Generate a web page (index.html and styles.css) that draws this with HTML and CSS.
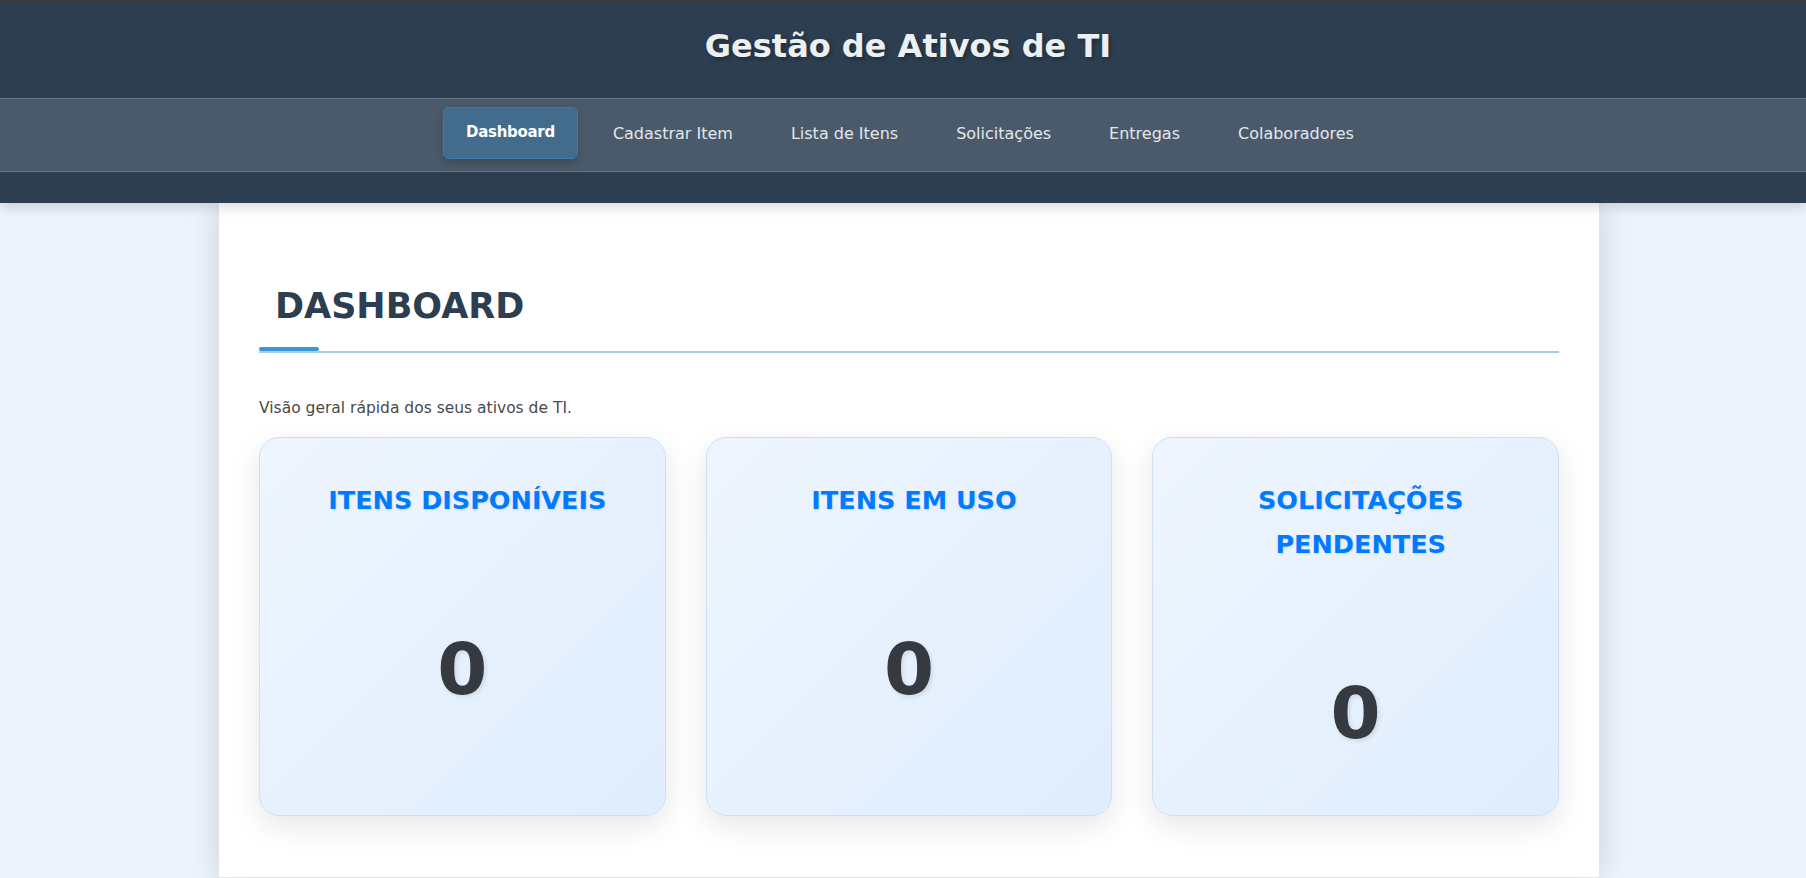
FILE: index.html
```html
<!DOCTYPE html>
<html lang="pt-BR">
<head>
<meta charset="utf-8">
<title>Gestão de Ativos de TI</title>
<link rel="stylesheet" href="styles.css">
</head>
<body>
<header class="site-header">
  <h1 class="site-title">Gestão de Ativos de TI</h1>
  <nav class="main-nav">
    <a class="nav-link active" href="#">Dashboard</a>
    <a class="nav-link" href="#">Cadastrar Item</a>
    <a class="nav-link" href="#">Lista de Itens</a>
    <a class="nav-link" href="#">Solicitações</a>
    <a class="nav-link" href="#">Entregas</a>
    <a class="nav-link" href="#">Colaboradores</a>
  </nav>
</header>
<div class="page">
  <main class="container">
    <h2 class="section-title">DASHBOARD</h2>
    <p class="intro">Visão geral rápida dos seus ativos de TI.</p>
    <div class="cards">
      <div class="card">
        <h3 class="card-title">ITENS DISPONÍVEIS</h3>
        <div class="card-value">0</div>
      </div>
      <div class="card">
        <h3 class="card-title">ITENS EM USO</h3>
        <div class="card-value">0</div>
      </div>
      <div class="card">
        <h3 class="card-title">SOLICITAÇÕES<br>PENDENTES</h3>
        <div class="card-value">0</div>
      </div>
    </div>
  </main>
</div>
</body>
</html>
```

FILE: styles.css
```css
* { box-sizing: border-box; }

html, body {
  margin: 0;
  padding: 0;
}

body {
  background: #edf3fb;
  font-family: "DejaVu Sans", "Liberation Sans", sans-serif;
  color: #333;
  min-height: 878px;
}

.site-header {
  position: relative;
  z-index: 2;
  background: #2c3e50;
  border-top: 2px solid #3a3a3a;
  padding: 25px 0 31px;
  box-shadow: 0 4px 12px rgba(0, 0, 0, 0.15);
}

.site-title {
  margin: 0 0 33px;
  padding-left: 10px;
  text-align: center;
  color: #ecf0f1;
  font-size: 32px;
  line-height: 38px;
  font-weight: bold;
  text-shadow: 2px 2px 4px rgba(0, 0, 0, 0.3);
}

.main-nav {
  display: flex;
  justify-content: center;
  gap: 12px;
  padding: 10px 0 10px 14px;
  background: rgba(255, 255, 255, 0.15);
  border-top: 1px solid #66758a;
  border-bottom: 1px solid #66758a;
}

.nav-link {
  display: block;
  padding: 14px 22px 16px;
  border: 1px solid transparent;
  border-radius: 6px;
  color: #e2e8ec;
  text-decoration: none;
  font-size: 16px;
  line-height: 20px;
}

.nav-link.active {
  background: #436b8c;
  border-color: #3c7ab0;
  color: #ffffff;
  font-weight: bold;
  font-size: 15px;
  letter-spacing: -0.3px;
  transform: translateY(-2px);
  box-shadow: 0 4px 8px rgba(0, 0, 0, 0.2);
}

.page {
  padding-left: 12px;
}

.container {
  width: 1380px;
  margin: 0 auto;
  min-height: 674px;
  background: #ffffff;
  padding: 83px 40px 40px;
  box-shadow: 0 0 30px rgba(0, 0, 0, 0.15);
}

.section-title {
  position: relative;
  margin: 0 0 43px;
  padding: 0 0 24px 16px;
  border-bottom: 2px solid #a9cfe7;
  color: #2c3e50;
  font-size: 35px;
  line-height: 40.7px;
  font-weight: bold;
}

.section-title::after {
  content: "";
  position: absolute;
  left: 0;
  bottom: 0;
  width: 60px;
  height: 4px;
  border-radius: 2px;
  background: #3498db;
}

.intro {
  margin: 0 0 17px;
  font-size: 15.5px;
  line-height: 24px;
  color: #4a4a4a;
}

.cards {
  display: grid;
  grid-template-columns: repeat(3, 1fr);
  gap: 40px;
}

.card {
  display: flex;
  flex-direction: column;
  align-items: center;
  text-align: center;
  padding: 40px 20px 60px;
  border: 1px solid #cddff4;
  border-radius: 20px;
  background: linear-gradient(135deg, #eef5fe 0%, #e0edfd 100%);
  box-shadow: 0 10px 30px rgba(0, 0, 0, 0.1);
}

.card-title {
  margin: 0;
  padding-left: 10px;
  color: #007bff;
  font-size: 25.5px;
  line-height: 44px;
  font-weight: bold;
  text-shadow: 1px 1px 2px rgba(0, 0, 0, 0.1);
}

.card-value {
  margin-top: 105px;
  color: #343a40;
  font-size: 72px;
  line-height: 84px;
  font-weight: bold;
  text-shadow: 2px 2px 4px rgba(0, 0, 0, 0.1);
}
```
